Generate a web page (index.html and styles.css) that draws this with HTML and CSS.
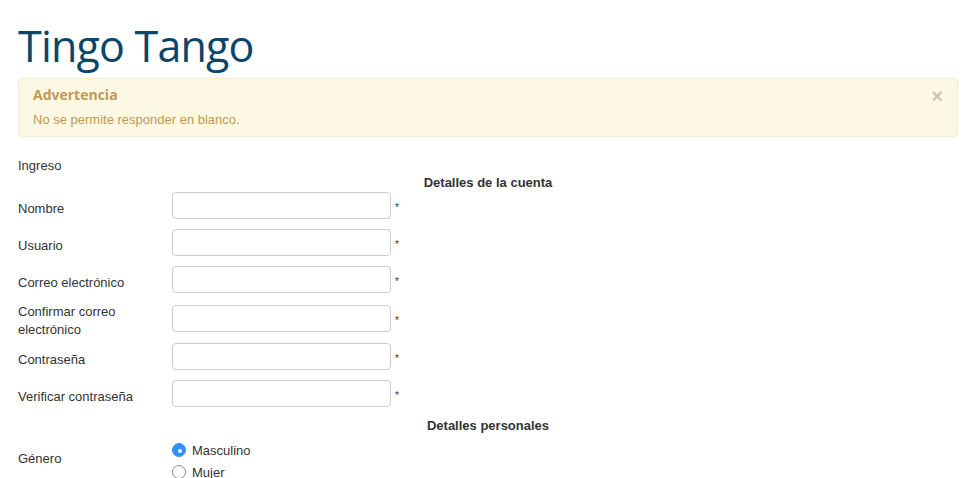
FILE: index.html
```html
<!DOCTYPE html>
<html lang="es">
<head>
  <meta charset="UTF-8">
  <title>Tingo Tango - Registro</title>
  <link rel="stylesheet" href="styles.css">
</head>
<body>

<div class="page">
  <h1 class="site-title">Tingo Tango</h1>

  <div class="alert">
    <span class="alert-close">&times;</span>
    <h4 class="alert-title">Advertencia</h4>
    <p class="alert-text">No se permite responder en blanco.</p>
  </div>

  <form class="register">
    <div class="form-caption">Ingreso</div>

    <div class="section-title">Detalles de la cuenta</div>

    <div class="field-row">
      <label class="field-label">Nombre</label>
      <div class="field-input"><input type="text"><span class="req">*</span></div>
    </div>
    <div class="field-row">
      <label class="field-label">Usuario</label>
      <div class="field-input"><input type="text"><span class="req">*</span></div>
    </div>
    <div class="field-row">
      <label class="field-label">Correo electrónico</label>
      <div class="field-input"><input type="text"><span class="req">*</span></div>
    </div>
    <div class="field-row">
      <label class="field-label">Confirmar correo electrónico</label>
      <div class="field-input"><input type="text"><span class="req">*</span></div>
    </div>
    <div class="field-row">
      <label class="field-label">Contraseña</label>
      <div class="field-input"><input type="password"><span class="req">*</span></div>
    </div>
    <div class="field-row">
      <label class="field-label">Verificar contraseña</label>
      <div class="field-input"><input type="password"><span class="req">*</span></div>
    </div>

    <div class="section-title section-next">Detalles personales</div>

    <div class="field-row">
      <label class="field-label">Género</label>
      <div class="radio-group">
        <label class="radio-option"><span class="radio checked"></span>Masculino</label>
        <label class="radio-option"><span class="radio"></span>Mujer</label>
      </div>
    </div>
  </form>
</div>

</body>
</html>
```

FILE: styles.css
```css
body {
  margin: 0;
  font-family: 'Liberation Sans', Arial, sans-serif;
  font-size: 13px;
  color: #333;
  background-color: #fff;
}
.page {
  width: 940px;
  padding: 0 15px 0 18px;
}
.site-title {
  font-family: 'Open Sans', sans-serif;
  font-weight: 400;
  font-size: 43px;
  letter-spacing: -0.8px;
  line-height: 52px;
  color: #0a4669;
  margin: 20px 0 6px 0;
}
.alert {
  position: relative;
  background-color: #fcf8e3;
  border: 1px solid #faebcc;
  border-radius: 4px;
  color: #c09853;
  padding: 6px 14px 6px 14px;
}
.alert-title {
  font-family: 'Open Sans', sans-serif;
  font-weight: 700;
  font-size: 14px;
  line-height: 20px;
  margin: 0 0 5px 0;
}
.alert-text {
  margin: 0;
  line-height: 20px;
}
.alert-close {
  position: absolute;
  top: 7px;
  right: 14px;
  font-size: 20px;
  font-weight: bold;
  line-height: 20px;
  color: #000;
  opacity: 0.2;
}
.register {
  margin-top: 20px;
}
.form-caption {
  line-height: 18px;
}
.section-title {
  text-align: center;
  font-weight: bold;
  line-height: 18px;
  margin-top: -1px;
}
.section-next {
  margin-top: 2px;
}
.field-row {
  display: flex;
  align-items: center;
  margin-bottom: 4px;
}
.field-label {
  width: 154px;
  line-height: 18px;
}
.field-input {
  display: flex;
  align-items: flex-start;
}
.field-input input {
  width: 219px;
  height: 27px;
  box-sizing: border-box;
  border: 1px solid #ccc;
  border-radius: 4px;
  margin: 0 0 6px 0;
  padding: 4px 6px;
  font: inherit;
}
.req {
  font-size: 10px;
  margin: 10px 0 0 4px;
}
.radio-group {
  padding-top: 4px;
}
.radio-option {
  display: flex;
  align-items: center;
  height: 22px;
  font-size: 13px;
}
.radio {
  width: 14px;
  height: 14px;
  border: 1px solid #888;
  border-radius: 50%;
  margin: 0 6px 0 0;
  box-sizing: border-box;
  position: relative;
}
.radio.checked {
  background-color: #2f8ff6;
  border-color: #2f8ff6;
}
.radio.checked::after {
  content: "";
  position: absolute;
  top: 5px;
  left: 5px;
  width: 4px;
  height: 4px;
  border-radius: 50%;
  background-color: #fff;
}
```
